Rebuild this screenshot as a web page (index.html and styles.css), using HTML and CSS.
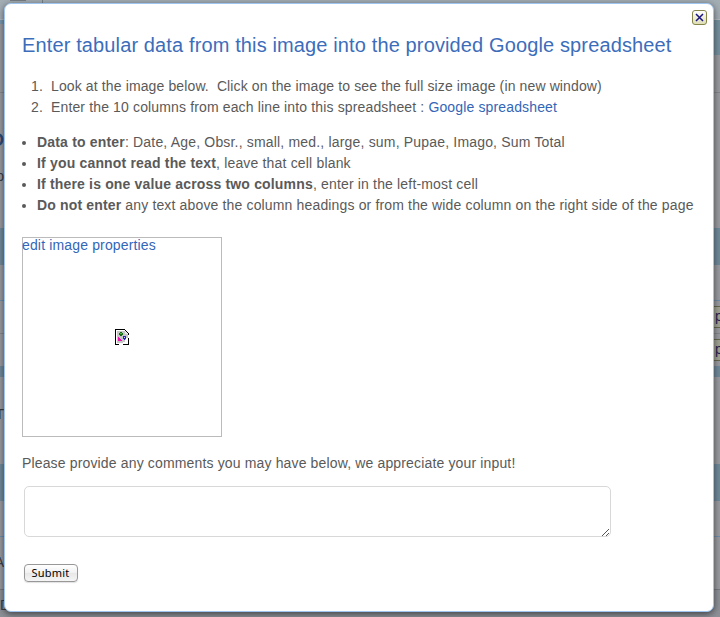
FILE: index.html
```
<!DOCTYPE html>
<html lang="en">
<head>
<meta charset="utf-8">
<title>Enter tabular data</title>
<link rel="stylesheet" href="styles.css">
</head>
<body>
<div class="page" aria-hidden="true">
  <div class="row top"><i class="tab"></i><i class="divider"></i></div>
  <div class="row nav"><span class="nav-side"></span><span class="nav-band"></span></div>
  <div class="row intro"></div>
  <div class="row heading"><b class="heading-text">D</b><span class="sub-text">p</span></div>
  <div class="row band"></div>
  <div class="row plain blue-line"></div>
  <div class="row field"><span class="stub">p</span></div>
  <div class="row field last"><span class="stub">p</span></div>
  <div class="row thin-band"></div>
  <div class="row section"><span>T</span></div>
  <div class="row band"></div>
  <div class="row gap blue-line"></div>
  <div class="row entry"><span>A</span></div>
  <div class="row end"><span class="from-start">D</span></div>
</div>
<main class="dialog">
  <button class="close" aria-label="Close"><svg width="9" height="9" viewBox="0 0 9 9"><path d="M1 1l7 7M8 1l-7 7" stroke="#1a1480" stroke-width="1.5"/></svg></button>
  <h1><span>Enter tabular data from this image into the provided Google spreadsheet</span></h1>
  <ol>
    <li class="step-look"><span>Look at the image below.&nbsp; Click on the image to see the full size image (in new window)</span></li>
    <li class="step-enter"><span>Enter the 10 columns from each line into this spreadsheet : <a>Google spreadsheet</a></span></li>
  </ol>
  <ul>
    <li class="note-data"><span><b>Data to enter</b>: Date, Age, Obsr., small, med., large, sum, Pupae, Imago, Sum Total</span></li>
    <li class="note-blank"><span><b>If you cannot read the text</b>, leave that cell blank</span></li>
    <li class="note-across"><span><b>If there is one value across two columns</b>, enter in the left-most cell</span></li>
    <li class="note-skip"><span><b>Do not enter</b> any text above the column headings or from the wide column on the right side of the page</span></li>
  </ul>
  <div class="image-box">
    <a>edit image properties</a>
    <svg class="broken" width="14" height="16" viewBox="0 0 14 16" shape-rendering="crispEdges">
      <path d="M0 0h10v1H1v14h3v1H0zM13 9h1v7H8v-1h5zM10 1h1v1h-1zM11 2h1v1h-1zM12 3h1v1h-1zM13 4h1v2h-1z" fill="#000"/>
      <path d="M2 2h8v3h3v4h-2v2h-1v2H8v1H2z" fill="#c6c6c6"/>
      <path d="M10 2h1v1h1v1h1v1h-3z" fill="#e8e8e8"/>
      <path d="M5 3h2v1h1v2H7v1H5V6H4V4h1z" fill="#176b17"/><path d="M5 4h2v1H5z" fill="#54b63a"/>
      <path d="M8 7h3v3h-1v1H9v-1H8z" fill="#2424bd"/><path d="M9 8h1v1H9z" fill="#d5d5ff"/>
      <path d="M3 8h1v1h1v1h1v1h1v1H3z" fill="#f010b0"/>
    </svg>
  </div>
  <p><span>Please provide any comments you may have below, we appreciate your input!</span></p>
  <div class="comments"><svg class="grip" width="8" height="8" viewBox="0 0 8 8" shape-rendering="crispEdges"><path d="M0 7h1v1H0zM1 6h1v1H1zM2 5h1v1H2zM3 4h1v1H3zM4 3h1v1H4zM5 2h1v1H5zM6 1h1v1H6zM4 7h1v1H4zM5 6h1v1H5zM6 5h1v1H6z" fill="#555"/></svg></div>
  <button class="submit">Submit</button>
</main>
</body>
</html>
```

FILE: styles.css
```
* { box-sizing: border-box; }
body {
  margin: 0;
  height: 617px;
  overflow: hidden;
  font: 14px/21px "Liberation Sans", Arial, sans-serif;
  color: #5a5a5a;
}
.page { height: 617px; background: #999ba0; color: #3b3d42; }
.row { width: 100%; overflow: hidden; }
.top { display: flex; height: 19px; background: #a3adb4; }
.tab { width: 16px; height: 1px; margin-left: 10px; background: #777f86; }
.divider { width: 1px; height: 3px; margin-left: 16px; background: #788087; }
.nav { display: flex; height: 36px; border-top: 1px solid #b4bbbf; }
.nav-side { width: 50%; height: 4px; background: #7898ae; }
.nav-band { width: 50%; background: #75909f; }
.intro { height: 38px; border-bottom: 1px solid #85878b; }
.heading { height: 135px; padding-top: 37px; }
.heading span, .heading b { display: block; width: 4px; direction: rtl; white-space: nowrap; }
.heading-text { font-size: 18px; color: #2e4b75; }
.sub-text { margin-top: 15px; }
.band { height: 37px; background: #708a9b; }
.plain { height: 36px; }
.blue-line { border-bottom: 1px solid #6d8eaa; }
.field { display: flex; justify-content: flex-end; height: 33px; padding-top: 5px; border-bottom: 1px solid #85878b; }
.last { height: 32px; border: 0; }
.stub { width: 6px; height: 22px; padding-left: 1px; background: #a1a394; border: solid #66684f; border-width: 1px 0; color: #262352; line-height: 19px; }
.thin-band { height: 11px; background: #708a9b; }
.section { height: 87px; padding-top: 27px; }
.section span, .entry span, .end span { display: block; width: 4px; direction: rtl; }
.gap { height: 36px; }
.entry { height: 53px; padding-top: 15px; border-bottom: 1px solid #797b80; }
.end { height: 27px; padding-top: 5px; background: #8d9096; }
.end .from-start { direction: ltr; }

.dialog {
  position: absolute;
  left: 4px;
  top: 3px;
  width: 710px;
  height: 609px;
  padding: 30px 17px 0;
  background: #fff;
  border: 1px solid #9fc5ee;
  border-radius: 7px;
  box-shadow: 0 2px 7px rgba(0, 0, 0, .55);
}
a { color: #3366b8; }
h1, p, ul, ol { margin: 0; }
h1 { font-size: 20px; line-height: 22px; font-weight: 400; color: #3c6dbb; letter-spacing: .128px; }
li span, p span, h1 span { white-space: nowrap; }
ol { margin-top: 20px; padding-left: 9px; list-style: none; counter-reset: step; }
ol li { display: flex; counter-increment: step; }
ol li::before { content: counter(step) "."; width: 20px; }
ul { margin-top: 14px; padding-left: 15px; }
.step-look { letter-spacing: .124px; }
.step-enter { letter-spacing: .142px; }
.note-data { letter-spacing: .18px; }
.note-blank { letter-spacing: .176px; }
.note-across { letter-spacing: .167px; }
.note-skip { letter-spacing: .152px; }
.image-box {
  position: relative;
  width: 200px;
  height: 200px;
  margin-top: 21px;
  border: 1px solid #bbb;
  line-height: 15px;
}
.image-box a { display: block; margin-left: -1px; letter-spacing: .15px; }
.broken { position: absolute; left: 92px; top: 91px; }
p { margin-top: 16px; letter-spacing: .15px; }
.comments {
  position: relative;
  width: 587px;
  height: 51px;
  margin: 12px 0 0 2px;
  border: 1px solid #d8d8d8;
  border-radius: 5px;
}
.grip { position: absolute; right: 0; bottom: 0; }
.close {
  position: absolute;
  right: 6px;
  top: 6px;
  display: grid;
  place-items: center;
  width: 15px;
  height: 15px;
  padding: 0;
  border: 1px solid #85854b;
  border-radius: 3px;
  background: linear-gradient(#fff, #dedeb5);
}
.submit {
  display: block;
  width: 54px;
  height: 18px;
  margin: 27px 0 0 2px;
  padding: 0 1px 0 0;
  border: 1px solid #989898;
  border-radius: 4px;
  background: linear-gradient(#fff, #f1f1f1 50%, #e7e7e7 50%, #f5f5f5);
  box-shadow: 0 1px 1px rgba(0, 0, 0, .12);
  color: #000;
  font: 11px/16px "Noto Sans", sans-serif;
  letter-spacing: .2px;
}
```
